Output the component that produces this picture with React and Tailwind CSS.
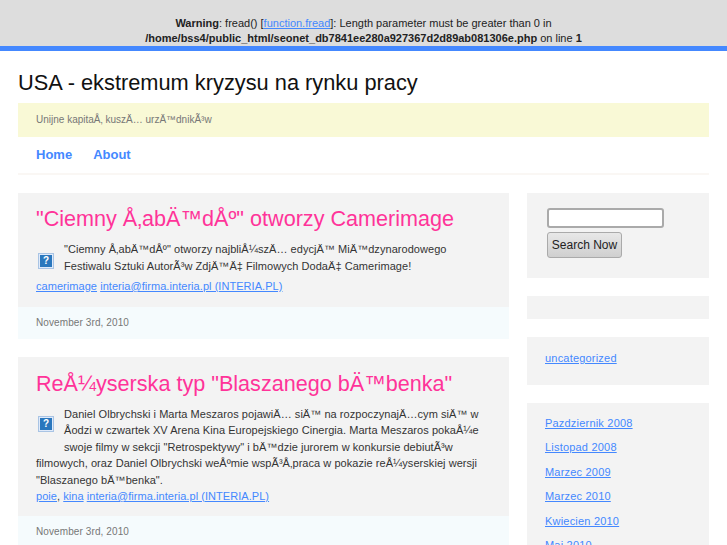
const font = "font-['Liberation_Sans',Arial,sans-serif]"

function BrokenImage({ className = '' }) {
  return (
    <span className={`float-left ml-[2px] mr-[10px] flex h-[16px] w-[16px] items-center justify-center border border-[#a9c4e4] bg-[#dfeafa] p-[1px] ${className}`}>
      <span className="flex h-full w-full items-center justify-center bg-[#2a77bd] text-[10px] leading-none font-bold text-white">?</span>
    </span>
  )
}

function A({ children }) {
  return <a href="#" className="text-[#4488ff] underline">{children}</a>
}

function Post({ title, children, meta, iconClass, bodyClass, pad }) {
  return (
    <article className="mb-[18px] bg-[#f3f3f3]">
      <div className={`px-[18px] ${pad}`}>
        <h2 className="text-[21.6px] leading-[33px] text-[#ff3399]">{title}</h2>
        <div className={`text-[11px] leading-[16.5px] tracking-[0.05px] text-[#333] ${bodyClass}`}>
          <BrokenImage className={iconClass} />
          {children}
        </div>
        <div className="text-[11px] leading-[16.5px] tracking-[0.05px] text-[#333]">{meta}</div>
      </div>
      <div className="bg-[#f5fbfd] px-[18px] py-[8px] text-[10px] leading-[16px] tracking-[0.1px] text-[#777]">November 3rd, 2010</div>
    </article>
  )
}

export default function App() {
  return (
    <div className={`h-[545px] overflow-hidden bg-white ${font}`}>
      <div className="border-b-[5px] border-[#4488ff] bg-[#dddddd] pt-[16px] text-center text-[11px] leading-[15px] text-[#222]">
        <b>Warning</b>: fread() [<a href="#" className="text-[#4488ff] underline">function.fread</a>]: Length parameter must be greater than 0 in
        <br />
        <b>/home/bss4/public_html/seonet_db7841ee280a927367d2d89ab081306e.php</b> on line <b>1</b>
      </div>

      <div className="px-[18px]">
        <h1 className="pt-[16px] pb-[5px] text-[21.8px] leading-[31px] text-[#111]">USA - ekstremum kryzysu na rynku pracy</h1>
        <div className="bg-[#f9f9d6] px-[18px] py-[9px] text-[10px] leading-[16px] text-[#777]">Unijne kapitaÅ‚ kuszÄ… urzÄ™dnikÃ³w</div>

        <nav className="flex gap-[21px] border-b-[2px] border-[#faf7f4] px-[18px] pt-[8px] pb-[9px] text-[13px] leading-[19px] font-bold text-[#4488ff]">
          <a href="#">Home</a>
          <a href="#">About</a>
        </nav>

        <div className="mt-[18px] flex gap-[18px]">
          <main className="w-[491px]">
            <Post
              title={'"Ciemny Å‚abÄ™dÅº" otworzy Camerimage'}
              iconClass="mt-[12px]"
              bodyClass="mt-[6px]"
              pad="pt-[9px] pb-[12px]"
              meta={<span className="mt-[4px] block"><A>camerimage</A> <A>interia@firma.interia.pl (INTERIA.PL)</A></span>}
            >
              "Ciemny Å‚abÄ™dÅº" otworzy najbliÅ¼szÄ… edycjÄ™ MiÄ™dzynarodowego Festiwalu Sztuki AutorÃ³w ZdjÄ™Ä‡ Filmowych DodaÄ‡ Camerimage!
            </Post>
            <Post
              title={'ReÅ¼yserska typ "Blaszanego bÄ™benka"'}
              iconClass="mt-[10px] mb-[16px]"
              bodyClass="mt-[6px]"
              pad="pt-[10px] pb-[11px]"
              meta={<span><A>poie</A>, <A>kina</A> <A>interia@firma.interia.pl (INTERIA.PL)</A></span>}
            >
              Daniel Olbrychski i Marta Meszaros pojawiÄ… siÄ™ na rozpoczynajÄ…cym siÄ™ w Åodzi w czwartek XV Arena Kina Europejskiego Cinergia. Marta Meszaros pokaÅ¼e swoje filmy w sekcji "Retrospektywy" i bÄ™dzie jurorem w konkursie debiutÃ³w filmowych, oraz Daniel Olbrychski weÅºmie wspÃ³Å‚praca w pokazie reÅ¼yserskiej wersji "Blaszanego bÄ™benka".
            </Post>
          </main>

          <aside className="w-[182px] text-[11px] leading-[16.5px] tracking-[0.2px]">
            <div className="mb-[18px] bg-[#f3f3f3] px-[20px] pt-[15px] pb-[20px]">
              <input className="block h-[20px] w-[117px] rounded-[3px] border-2 border-[#aaa] bg-white" />
              <button className="mt-[4px] block h-[26px] w-[75px] rounded-[3px] border border-[#aaa] bg-gradient-to-b from-[#e8e8e8] to-[#cfcfcf] text-[12px] tracking-normal text-[#222]">Search Now</button>
            </div>
            <div className="mb-[18px] h-[23px] bg-[#f3f3f3]" />
            <div className="mb-[18px] bg-[#f3f3f3] px-[18px] pt-[13px] pb-[18px]"><A>uncategorized</A></div>
            <ul className="flex flex-col gap-[8px] bg-[#f3f3f3] px-[18px] pt-[12px] pb-[12px]">
              {['Pazdziernik 2008', 'Listopad 2008', 'Marzec 2009', 'Marzec 2010', 'Kwiecien 2010', 'Maj 2010'].map(m => (
                <li key={m}><A>{m}</A></li>
              ))}
            </ul>
          </aside>
        </div>
      </div>
    </div>
  )
}
